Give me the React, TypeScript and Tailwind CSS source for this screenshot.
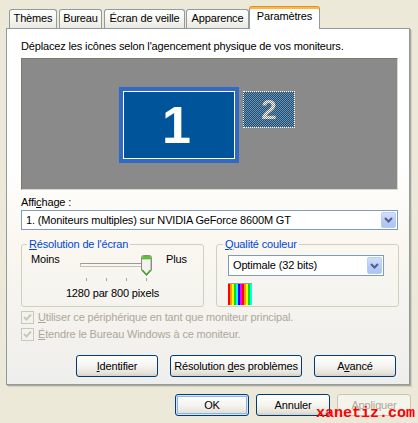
import React from "react";

const U = ({ children }: { children: React.ReactNode }) => (
  <span className="underline decoration-1 underline-offset-[1px]">{children}</span>
);

function Tab({ children, w, ml }: { children: React.ReactNode; w: string; ml: string }) {
  return (
    <div
      className={`${w} ${ml} flex h-[19px] justify-center rounded-t-[3px] border border-b-0 border-[#919b9c] bg-[linear-gradient(to_bottom,#ffffff,#f4f3ee_60%,#e9e8e1)] pt-[2px]`}
    >
      <span>{children}</span>
    </div>
  );
}

function ComboArrow() {
  return (
    <div className="flex h-full w-[15px] items-center justify-center rounded-[2px] border border-[#b9cdfa] bg-[linear-gradient(to_bottom,#d2defc,#b9cbf7_55%,#aec3f4)]">
      <svg width="9" height="6" viewBox="0 0 9 6">
        <path d="M1 1 L4.5 4.5 L8 1" fill="none" stroke="#4d6185" strokeWidth="2" />
      </svg>
    </div>
  );
}

function Button({ children, w, def, disabled }: { children: React.ReactNode; w: string; def?: boolean; disabled?: boolean }) {
  if (disabled)
    return (
      <div className={`${w} flex h-[22px] items-center justify-center rounded-[3px] border border-[#c9c7ba] bg-[#f5f4ea] text-[#aca899]`}>
        <span>{children}</span>
      </div>
    );
  return (
    <div
      className={`${w} flex h-[22px] items-center justify-center rounded-[3px] border border-[#003c74] bg-[linear-gradient(to_bottom,#ffffff,#f5f4f0_50%,#e6e3da_85%,#d6d0c5)] ${
        def ? "shadow-[inset_0_0_0_1px_#cee7ff,inset_0_0_0_2px_#8fb1ec]" : ""
      }`}
    >
      <span>{children}</span>
    </div>
  );
}

function Checkbox({ children }: { children: React.ReactNode }) {
  return (
    <div className="flex h-[17px] items-start">
      <div className="flex h-[13px] w-[13px] items-center justify-center border border-[#cac8bb] bg-[#f3f3ee]">
        <svg width="9" height="9" viewBox="0 0 9 9">
          <path d="M1 4 L3.5 6.5 L8 1.5" fill="none" stroke="#cac8bb" strokeWidth="2" />
        </svg>
      </div>
      <span className="ml-[4px] text-[#aca899]">{children}</span>
    </div>
  );
}

function Thumb() {
  return (
    <svg width="11" height="21" viewBox="0 0 11 21">
      <path d="M0.5 2.5 Q0.5 0.5 2.5 0.5 H8.5 Q10.5 0.5 10.5 2.5 V15 L5.5 20.5 L0.5 15 Z" fill="#f3f2ec" stroke="#8c8a7c" />
      <path d="M1 2.5 Q1 1 2.5 1 H8.5 Q10 1 10 2.5 V4 H1 Z" fill="#5cbf3a" />
      <rect x="1" y="4" width="9" height="1" fill="#b6e3a3" />
      <path d="M1.3 15 L5.5 19.6 L9.7 15" fill="none" stroke="#2ea421" strokeWidth="1.2" />
      <rect x="9" y="5" width="1" height="10" fill="#c9c7bb" />
    </svg>
  );
}

export default function App() {
  return (
    <div className="relative h-[423px] w-[418px] overflow-hidden bg-[#ece9d8] font-['Liberation_Sans',Arial,sans-serif] text-[11px] leading-[13px] tracking-[-0.15px] text-black">
      {/* Tabs */}
      <div className="relative z-10 mt-[6px] flex h-[22px] items-end pl-[9px]">
        <Tab w="w-[48px]" ml="ml-0">Thèmes</Tab>
        <Tab w="w-[43px]" ml="ml-[2px]">Bureau</Tab>
        <Tab w="w-[81px]" ml="ml-[2px]">Écran de veille</Tab>
        <Tab w="w-[63px]" ml="ml-[1px]">Apparence</Tab>
        <div className="-mb-px flex h-[22px] w-[71px] justify-center rounded-t-[3px] border-x border-t-2 border-[#919b9c] border-t-[#fbb940] bg-white pt-[1px] shadow-[0_-1px_0_#e68b2c]">
          <span>Paramètres</span>
        </div>
      </div>

      {/* Panel */}
      <div className="ml-[6px] h-[357px] w-[404px] border border-[#919b9c] bg-[linear-gradient(to_bottom,#ffffff_0%,#ffffff_38%,#fbf8f1_58%,#eeeeec_100%)] pl-[14px] pr-[10px] pt-[11px] shadow-[1px_1px_0_#aca899,2px_2px_0_#d4d0c4]">
        <div>Déplacez les icônes selon l'agencement physique de vos moniteurs.</div>

        {/* Monitor canvas */}
        <div className="relative mt-[5px] h-[132px] w-[377px] border border-b-[#d9d8cf] border-l-[#7a7c66] border-r-[#d9d8cf] border-t-[#7a7c66] bg-[#8a8a8a]">
          <div className="absolute left-[97px] top-[28px] h-[76px] w-[120px] bg-[#3169c6] p-[4px]">
            <div className="flex h-full w-full items-center justify-center border border-white bg-[#00559a] pr-[5px] font-['Liberation_Sans',Arial,sans-serif] text-[52px] font-bold leading-[52px] tracking-normal text-white">
              1
            </div>
          </div>
          <div className="absolute left-[221px] top-[32px] flex h-[37px] w-[52px] items-center justify-center border border-dotted border-white bg-[repeating-conic-gradient(#00559a_0_25%,#8a8a8a_0_50%)] bg-[length:2px_2px]">
            <span className="bg-[repeating-conic-gradient(#ffffff_0_25%,#8a8a8a_0_50%)] bg-[length:2px_2px] bg-clip-text text-[28px] font-bold leading-[28px] tracking-normal text-transparent">
              2
            </span>
          </div>
        </div>

        <div className="mt-[6px]">
          Affi<U>c</U>hage :
        </div>
        <div className="mt-px flex h-[20px] w-[377px] items-center border border-[#7f9db9] bg-white p-px pl-[4px]">
          <span className="flex-1">1. (Moniteurs multiples) sur NVIDIA GeForce 8600M GT</span>
          <ComboArrow />
        </div>

        <div className="mt-[8px] flex gap-[12px]">
          <fieldset className="h-[69px] w-[183px] rounded-[3px] border border-[#d0d0bf]">
            <legend className="ml-[5px] px-[2px] text-[#0046d5]">
              <U>R</U>ésolution de l'écran
            </legend>
            <div className="mt-[2px] flex h-[30px]">
              <span className="ml-[9px] w-[47px]">Moins</span>
              <div className="relative h-[30px] w-[76px]">
                <div className="absolute left-[2px] top-[10px] h-[4px] w-[67px] border border-[#c2c0b2] border-t-[#9b9a90] bg-[#f7f7f4]" />
                <div className="absolute left-[8px] top-[25px] h-[3px] w-px bg-[#a4a4a4]" />
                <div className="absolute left-[28px] top-[25px] h-[3px] w-px bg-[#a4a4a4]" />
                <div className="absolute left-[48px] top-[25px] h-[3px] w-px bg-[#a4a4a4]" />
                <div className="absolute left-[68px] top-[25px] h-[3px] w-px bg-[#a4a4a4]" />
                <div className="absolute left-[63px] top-[2px]">
                  <Thumb />
                </div>
              </div>
              <span className="ml-[12px]">Plus</span>
            </div>
            <div className="mt-[4px] text-center">1280 par 800 pixels</div>
          </fieldset>

          <fieldset className="h-[69px] w-[183px] rounded-[3px] border border-[#d0d0bf]">
            <legend className="ml-[6px] px-[2px] text-[#0046d5]">
              <U>Q</U>ualité couleur
            </legend>
            <div className="ml-[11px] mt-[4px] flex h-[21px] w-[156px] items-center border border-[#7f9db9] bg-white p-px pl-[4px]">
              <span className="flex-1">Optimale (32 bits)</span>
              <ComboArrow />
            </div>
            <div className="ml-[11px] mt-[7px] h-[22px] w-[24px] border-t border-[#9d9d9d] bg-[repeating-linear-gradient(90deg,#ff0000_0_2px,#ff9900_2px_4px,#ffff00_4px_6px,#00e000_6px_8px,#00ffff_8px_10px,#0000ff_10px_12px,#ff00ff_12px_14px)]" />
          </fieldset>
        </div>

        <div className="mt-[4px]">
          <Checkbox>
            <U>U</U>tiliser ce périphérique en tant que moniteur principal.
          </Checkbox>
          <Checkbox>
            <U>É</U>tendre le Bureau Windows à ce moniteur.
          </Checkbox>
        </div>

        <div className="ml-[55px] mt-[10px] flex gap-[12px]">
          <Button w="w-[82px]">
            <U>I</U>dentifier
          </Button>
          <Button w="w-[132px]">
            Résolution <U>d</U>es problèmes
          </Button>
          <Button w="w-[82px]">
            A<U>v</U>ancé
          </Button>
        </div>
      </div>

      {/* Dialog buttons */}
      <div className="mt-[9px] flex justify-end gap-[7px] pr-[7px]">
        <Button w="w-[74px]" def>
          OK
        </Button>
        <Button w="w-[74px]">Annuler</Button>
        <Button w="w-[74px]" disabled>
          Appliquer
        </Button>
      </div>

      <div className="absolute left-[316px] top-[406px] font-['Liberation_Mono',monospace] text-[15px] font-bold leading-[15px] tracking-normal text-[#ff0000]">
        xanetiz.com
      </div>
    </div>
  );
}
